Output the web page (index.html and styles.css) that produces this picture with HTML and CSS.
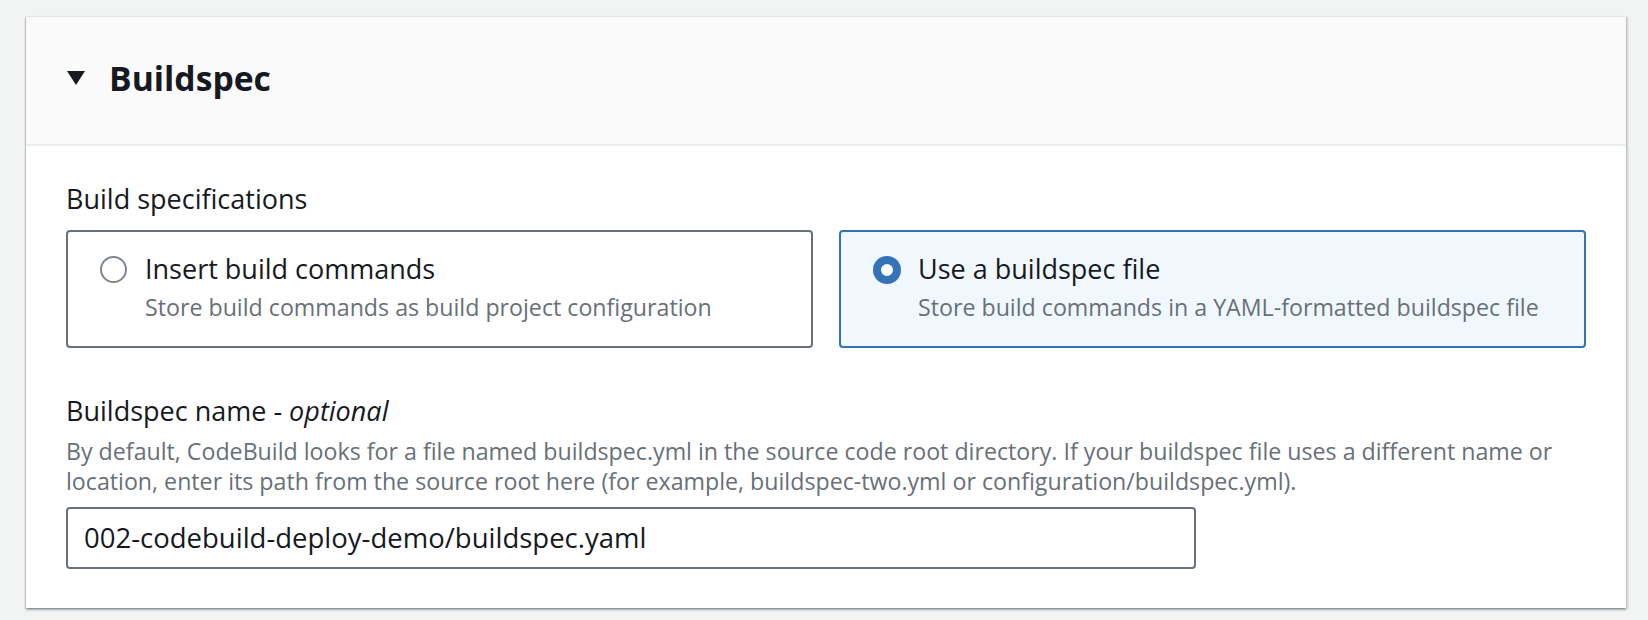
FILE: index.html
```html
<!DOCTYPE html>
<html lang="en">
<head>
<meta charset="utf-8">
<title>Buildspec</title>
<link rel="stylesheet" href="styles.css">
</head>
<body>
<section class="panel">
  <header class="panel-header">
    <svg class="caret" width="18" height="14" viewBox="0 0 18 14" aria-hidden="true"><polygon points="0,0 18,0 9,14" fill="#16191f"/></svg>
    <h2 class="panel-title">Buildspec</h2>
  </header>
  <div class="panel-body">
    <div class="field-label">Build specifications</div>
    <div class="tiles">
      <label class="tile">
        <span class="radio"></span>
        <span class="tile-text">
          <span class="tile-title">Insert build commands</span>
          <span class="tile-desc">Store build commands as build project configuration</span>
        </span>
      </label>
      <label class="tile tile-selected">
        <span class="radio radio-checked"></span>
        <span class="tile-text">
          <span class="tile-title">Use a buildspec file</span>
          <span class="tile-desc">Store build commands in a YAML-formatted buildspec file</span>
        </span>
      </label>
    </div>
    <div class="field">
      <div class="field-label">Buildspec name - <i class="optional">optional</i></div>
      <div class="field-desc">By default, CodeBuild looks for a file named buildspec.yml in the source code root directory. If your buildspec file uses a different name or location, enter its path from the source root here (for example, buildspec-two.yml or configuration/buildspec.yml).</div>
      <div class="input">002-codebuild-deploy-demo/buildspec.yaml</div>
    </div>
  </div>
</section>
</body>
</html>
```
FILE: styles.css
```css
* { box-sizing: border-box; }
html, body { margin: 0; padding: 0; }
body {
  background: #f2f3f3;
  font-family: "Open Sans", "Noto Sans", sans-serif;
  color: #16191f;
  padding: 16px 22px 0 26px;
  height: 620px;
  overflow: hidden;
}
.panel {
  width: 1600px;
  background: #ffffff;
  border-top: 1px solid #e4e6e6;
  box-shadow: 0 2px 2px 0 rgba(0, 28, 36, 0.28), 2px 1px 2px 0 rgba(0, 28, 36, 0.14), -1px 1px 1px 0 rgba(0, 28, 36, 0.14);
}
.panel-header {
  display: flex;
  align-items: center;
  background: #fafafa;
  border-bottom: 2px solid #eaeded;
  padding: 41px 40px 46px 41px;
}
.caret { display: block; flex: none; margin-right: 24px; }
.panel-title {
  margin: 0;
  font-size: 33.7px;
  line-height: 40px;
  font-weight: 700;
}
.panel-body {
  padding: 35px 40px 39px 40px;
}
.field-label {
  font-size: 27px;
  line-height: 36px;
}
.optional { font-style: italic; }
.tiles {
  display: grid;
  grid-template-columns: 1fr 1fr;
  gap: 26px;
  margin-top: 13px;
}
.tile {
  display: flex;
  align-items: flex-start;
  border: 2px solid #687078;
  border-radius: 4px;
  padding: 19px 20px 23px 32px;
  background: #ffffff;
}
.tile-selected {
  border-color: #3473b8;
  background: #f1f8fd;
}
.radio {
  flex: none;
  width: 27px;
  height: 27px;
  margin-top: 5px;
  margin-right: 18px;
  border: 2px solid #7d868f;
  border-radius: 50%;
  background: #ffffff;
}
.radio-checked {
  width: 28px;
  height: 28px;
  margin-right: 17px;
  border: 8.5px solid #3473b8;
}
.tile-text { display: flex; flex-direction: column; }
.tile-title {
  font-size: 27px;
  line-height: 36px;
}
.tile-desc {
  margin-top: 4px;
  font-size: 23.2px;
  line-height: 32px;
  color: #687078;
}
.field { margin-top: 45px; }
.field-desc {
  margin-top: 7px;
  font-size: 23.2px;
  line-height: 30px;
  color: #687078;
}
.input {
  margin-top: 11px;
  width: 1130px;
  height: 62px;
  border: 2px solid #687078;
  border-radius: 4px;
  padding: 11px 16px;
  font-size: 27.5px;
  line-height: 36px;
  color: #16191f;
  background: #ffffff;
}
```
